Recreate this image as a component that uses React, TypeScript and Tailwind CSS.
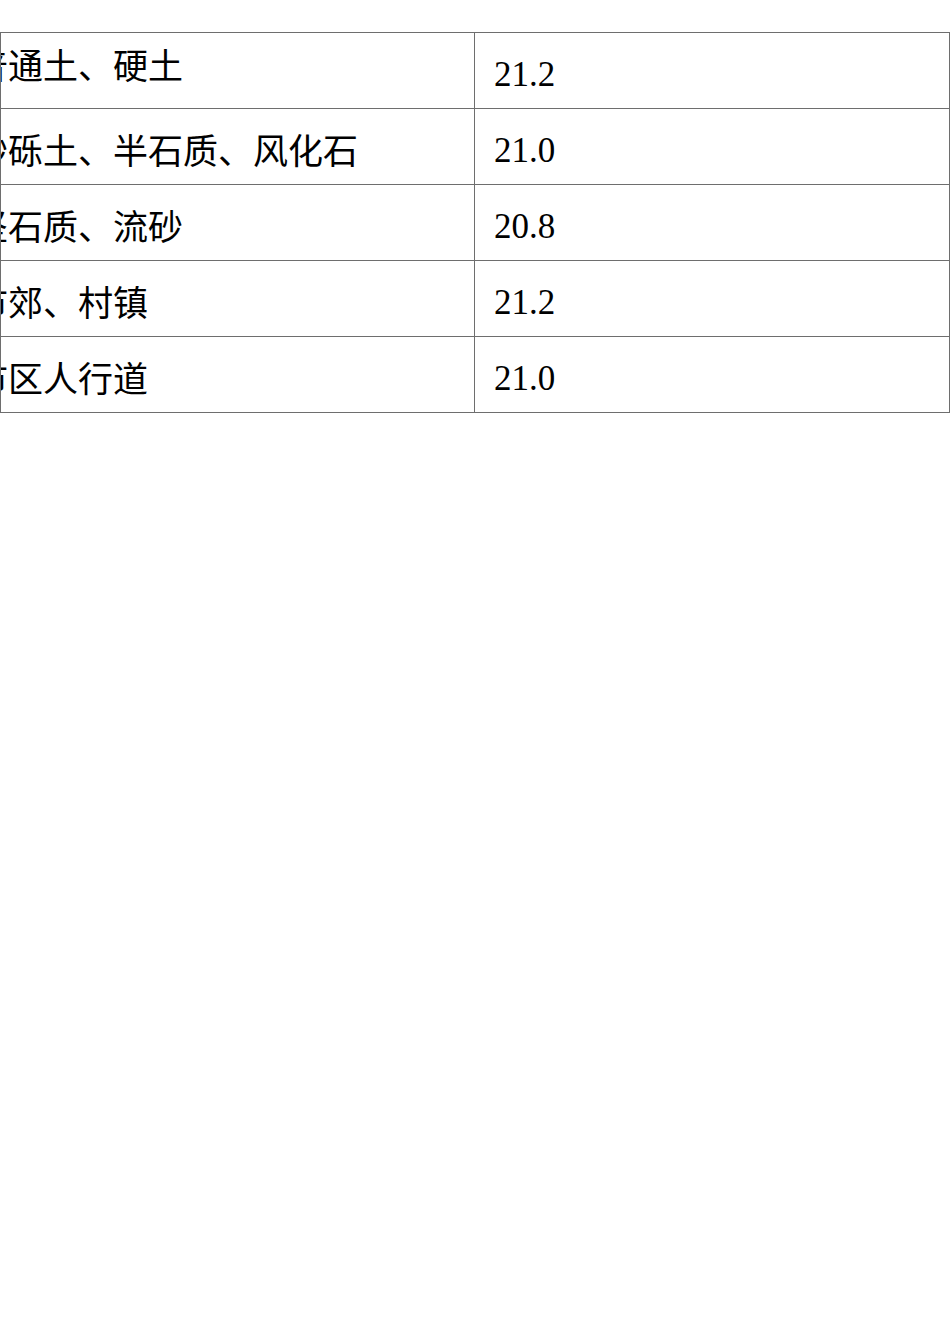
const rows = [
  { name: "普通土、硬土", value: "21.2", first: true },
  { name: "砂砾土、半石质、风化石", value: "21.0" },
  { name: "坚石质、流砂", value: "20.8" },
  { name: "市郊、村镇", value: "21.2" },
  { name: "市区人行道", value: "21.0" },
]

export default function App() {
  return (
    <div className="w-[950px] h-[1344px] bg-white overflow-hidden">
      <div className="mt-[32px] border-t border-l border-r border-[#6e6e6e]">
        {rows.map((row) => (
          <div key={row.name} className="flex h-[76px] border-b border-[#6e6e6e]">
            <div className="w-[474px] border-r border-[#6e6e6e] overflow-hidden">
              <div
                className={
                  row.first
                    ? "ml-[-28px] pt-[11px] whitespace-nowrap text-[35px] leading-[40px] text-black"
                    : "ml-[-28px] pt-[20px] whitespace-nowrap text-[35px] leading-[40px] text-black"
                }
                style={{ fontFamily: '"Noto Sans CJK SC", sans-serif' }}
              >
                {row.name}
              </div>
            </div>
            <div
              className="flex-1 pl-[19px] pt-[22px] text-[35px] leading-[40px] text-black"
              style={{ fontFamily: '"Liberation Serif", serif' }}
            >
              {row.value}
            </div>
          </div>
        ))}
      </div>
    </div>
  )
}
